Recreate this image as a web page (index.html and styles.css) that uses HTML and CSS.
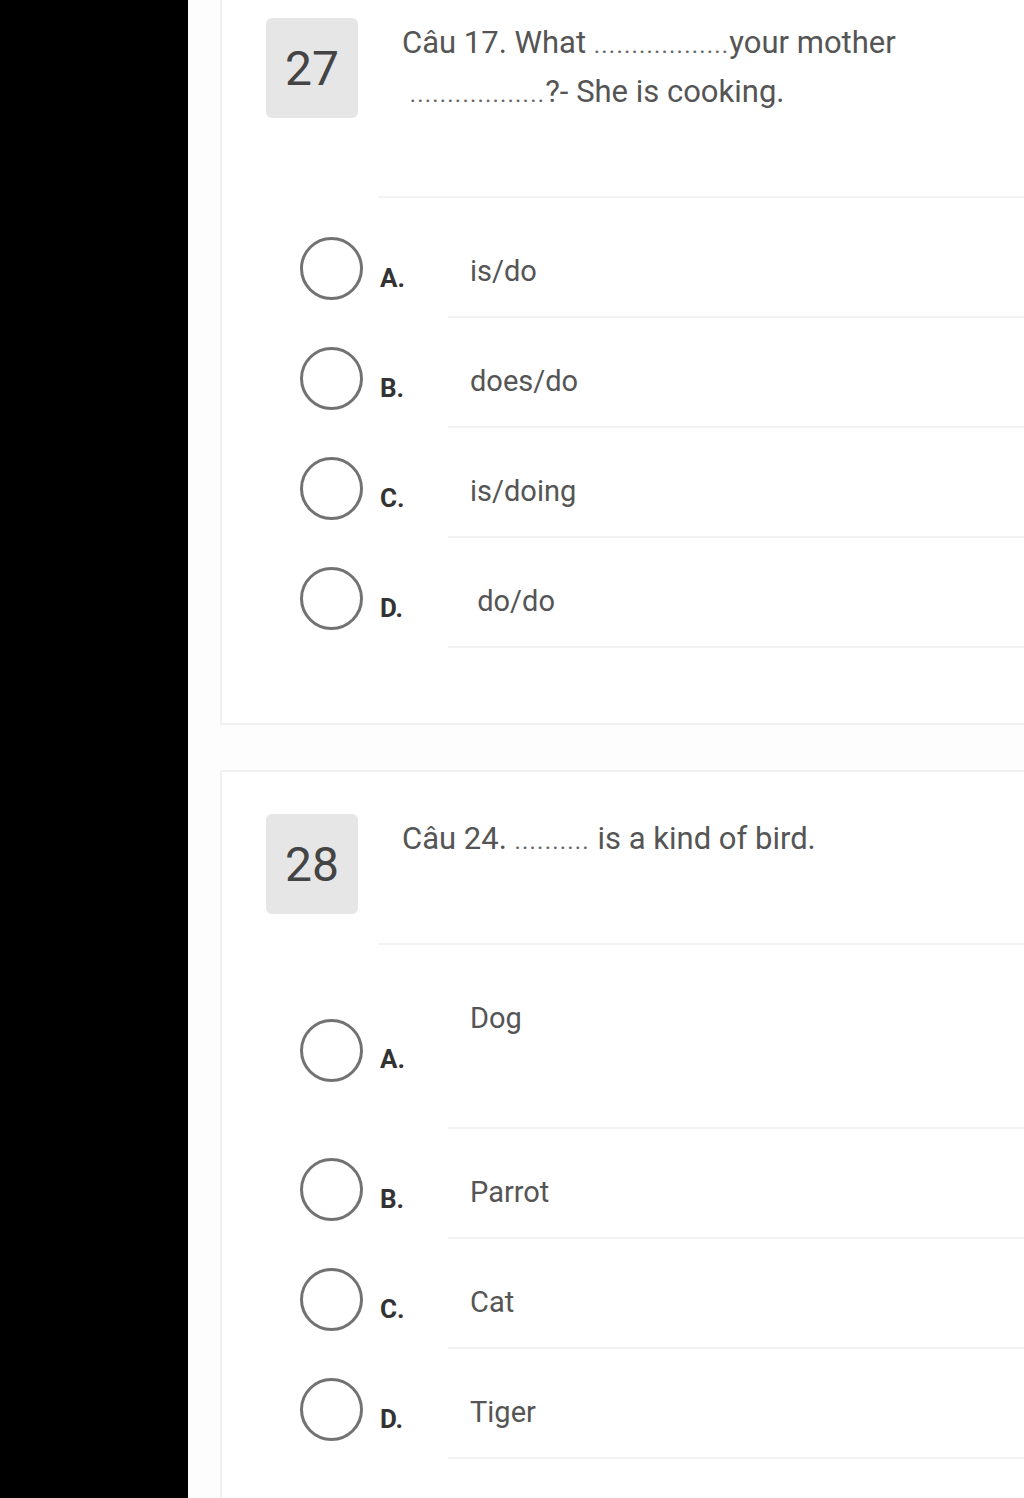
FILE: index.html
```html
<!DOCTYPE html>
<html lang="vi">
<head>
  <meta charset="UTF-8">
  <title>Bài kiểm tra</title>
  <link rel="stylesheet" href="styles.css">
</head>
<body>

  <!-- LEFT BLACK STRIP -->
  <div class="side"></div>

  <div class="page">

    <!-- QUESTION 27 -->
    <div class="card card-first">
      <div class="q-head">
        <div class="num-box">27</div>
        <div class="q-text">
          Câu 17. What <span class="dots">..................</span>your mother<br>
          &nbsp;<span class="dots">..................</span>?- She is cooking.
        </div>
      </div>
      <div class="options">
        <div class="option">
          <span class="radio"></span>
          <span class="letter">A.</span>
          <div class="answer">is/do</div>
        </div>
        <div class="option">
          <span class="radio"></span>
          <span class="letter">B.</span>
          <div class="answer">does/do</div>
        </div>
        <div class="option">
          <span class="radio"></span>
          <span class="letter">C.</span>
          <div class="answer">is/doing</div>
        </div>
        <div class="option">
          <span class="radio"></span>
          <span class="letter">D.</span>
          <div class="answer">&nbsp;do/do</div>
        </div>
      </div>
    </div>

    <!-- QUESTION 28 -->
    <div class="card">
      <div class="q-head">
        <div class="num-box">28</div>
        <div class="q-text">Câu 24. <span class="dots">..........</span> is a kind of bird.</div>
      </div>
      <div class="options">
        <div class="option option-tall">
          <span class="radio"></span>
          <span class="letter">A.</span>
          <div class="answer">Dog</div>
        </div>
        <div class="option">
          <span class="radio"></span>
          <span class="letter">B.</span>
          <div class="answer">Parrot</div>
        </div>
        <div class="option">
          <span class="radio"></span>
          <span class="letter">C.</span>
          <div class="answer">Cat</div>
        </div>
        <div class="option">
          <span class="radio"></span>
          <span class="letter">D.</span>
          <div class="answer">Tiger</div>
        </div>
      </div>
    </div>

  </div>

</body>
</html>
```

FILE: styles.css
```css
body {
  margin: 0;
  padding: 0;
  background-color: #000;
  font-family: Roboto, "Noto Sans", Arial, sans-serif;
  display: flex;
  height: 1498px;
  overflow: hidden;
}

.side {
  width: 188px;
  flex: 0 0 188px;
  background-color: #000;
}

.page {
  flex: 1;
  background-color: #fdfdfd;
  padding-left: 32px;
  overflow: hidden;
}

.card {
  background-color: #fff;
  border: 2px solid #f0f0f0;
  border-right: none;
  padding: 42px 0 75px 44px;
  margin-bottom: 45px;
}

.card-first {
  margin-top: -26px;
}

.q-head {
  display: flex;
  align-items: flex-start;
}

.num-box {
  width: 92px;
  height: 100px;
  flex: 0 0 92px;
  background-color: #e6e6e6;
  border-radius: 6px;
  display: flex;
  align-items: center;
  justify-content: center;
  font-size: 48px;
  color: #444;
}

.q-text {
  flex: 1;
  margin-left: 20px;
  padding-left: 24px;
  padding-bottom: 80px;
  border-bottom: 2px solid #f3f3f3;
  font-size: 31px;
  line-height: 49px;
  color: #555;
}

.dots {
  font-size: 24px;
  line-height: 1;
  letter-spacing: 1.2px;
  color: #666;
}

.options {
  padding-top: 10px;
  margin-left: 34px;
}

.option {
  display: flex;
  height: 110px;
}

.radio {
  width: 63px;
  height: 63px;
  flex: 0 0 63px;
  box-sizing: border-box;
  border: 3px solid #727272;
  border-radius: 50%;
  margin-top: 29px;
}

.letter {
  width: 85px;
  flex: 0 0 85px;
  padding-left: 17px;
  box-sizing: border-box;
  margin-top: 55px;
  font-size: 26px;
  line-height: 30px;
  font-weight: bold;
  color: #333;
}

.answer {
  flex: 1;
  box-sizing: border-box;
  border-bottom: 2px solid #f2f2f2;
  padding-left: 22px;
  padding-top: 46px;
  font-size: 29px;
  line-height: 34px;
  color: #555;
}

.option-tall {
  height: 174px;
}

.option-tall .radio {
  margin-top: 64px;
}

.option-tall .letter {
  margin-top: 89px;
}
```
